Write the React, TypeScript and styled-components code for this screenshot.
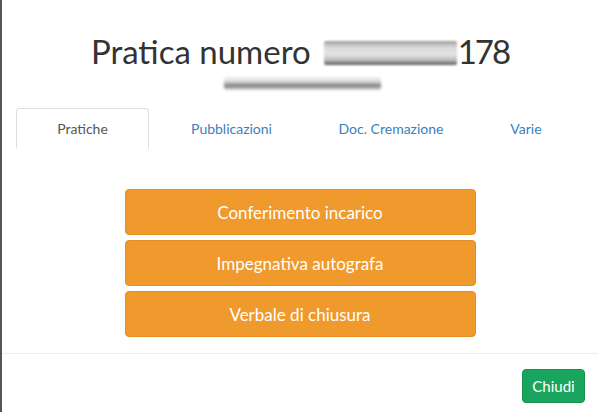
import styled, { createGlobalStyle } from "styled-components";
import { useState } from "react";

const GlobalStyle = createGlobalStyle`
  html, body {
    margin: 0;
    padding: 0;
    background: #ffffff;
  }
  * {
    box-sizing: border-box;
  }
`;

const Screen = styled.div`
  display: flex;
  width: 598px;
  height: 412px;
  overflow: hidden;
  font-family: Lato, "Liberation Sans", sans-serif;
`;

const Backdrop = styled.div`
  width: 2px;
  background-color: #555555;
`;

const Modal = styled.div`
  flex: 1;
  display: flex;
  flex-direction: column;
  background: #ffffff;
`;

const Header = styled.div`
  display: flex;
  flex-direction: column;
  align-items: center;
  padding-top: 32px;
  height: 108px;
`;

const Title = styled.h2`
  margin: 0;
  display: flex;
  align-items: center;
  font-size: 33px;
  font-weight: 400;
  line-height: 38px;
  color: #333333;
`;

const TitleNumber = styled.span`
  letter-spacing: -2px;
`;

const Redacted = styled.span<{ $w: number; $h: number }>`
  display: inline-block;
  width: ${(p) => p.$w}px;
  height: ${(p) => p.$h}px;
  background: linear-gradient(
    180deg,
    #9a9a9a 0%,
    #d8d8d8 25%,
    #e4e4e4 55%,
    #bcbcbc 80%,
    #555555 100%
  );
  filter: blur(1.2px);
  border-radius: 2px;
`;

const TitleBlur = styled(Redacted)`
  margin: 0 1px 0 13px;
  position: relative;
  top: 2px;
`;

const SubLine = styled(Redacted)`
  margin-top: 7px;
  margin-left: 4px;
  background: linear-gradient(
    180deg,
    #f4f4f4 0%,
    #d4d4d4 40%,
    #7a7a7a 65%,
    #dcdcdc 100%
  );
  filter: blur(1.6px);
`;

const Body = styled.div`
  padding: 0 14px;
`;

const Tabs = styled.ul`
  list-style: none;
  margin: 0;
  padding: 0;
  display: grid;
  grid-template-columns: 133px 165px 154px 116px;
  border-bottom: 1px solid #dddddd;
`;

const Tab = styled.li<{ $active?: boolean }>`
  height: 41px;
  margin-bottom: -1px;
  display: flex;
  align-items: center;
  justify-content: center;
  font-size: 14px;
  cursor: pointer;
  color: ${(p) => (p.$active ? "#555555" : "#3b7ebd")};
  background: #ffffff;
  border: 1px solid ${(p) => (p.$active ? "#dddddd" : "transparent")};
  border-bottom-color: ${(p) => (p.$active ? "#ffffff" : "transparent")};
  border-radius: 4px 4px 0 0;
`;

const Actions = styled.div`
  display: flex;
  flex-direction: column;
  align-items: center;
  gap: 5px;
  padding-top: 40px;
  height: 204px;
`;

const ActionButton = styled.button`
  width: 351px;
  height: 46px;
  border: 1px solid #e38f24;
  border-radius: 4px;
  background-color: #f0992c;
  color: #ffffff;
  font-family: Lato, "Liberation Sans", sans-serif;
  font-size: 17px;
  cursor: pointer;
`;

const Footer = styled.div`
  flex: 1;
  display: flex;
  justify-content: flex-end;
  align-items: flex-start;
  border-top: 1px solid #eeeeee;
  padding: 15px 13px 0 0;
`;

const CloseButton = styled.button`
  width: 63px;
  height: 34px;
  border: 1px solid #168f51;
  border-radius: 4px;
  background-color: #1aa55e;
  color: #ffffff;
  font-family: Lato, "Liberation Sans", sans-serif;
  font-size: 15px;
  cursor: pointer;
`;

const tabs = ["Pratiche", "Pubblicazioni", "Doc. Cremazione", "Varie"];
const actions = [
  "Conferimento incarico",
  "Impegnativa autografa",
  "Verbale di chiusura",
];

export default function App() {
  const [active, setActive] = useState(0);

  return (
    <>
      <GlobalStyle />
      <Screen>
        <Backdrop />
        <Modal>
          <Header>
            <Title>
              Pratica numero
              <TitleBlur $w={133} $h={24} />
              <TitleNumber>178</TitleNumber>
            </Title>
            <SubLine $w={157} $h={13} />
          </Header>
          <Body>
            <Tabs>
              {tabs.map((t, i) => (
                <Tab key={t} $active={i === active} onClick={() => setActive(i)}>
                  {t}
                </Tab>
              ))}
            </Tabs>
            <Actions>
              {actions.map((a) => (
                <ActionButton key={a}>{a}</ActionButton>
              ))}
            </Actions>
          </Body>
          <Footer>
            <CloseButton>Chiudi</CloseButton>
          </Footer>
        </Modal>
      </Screen>
    </>
  );
}
